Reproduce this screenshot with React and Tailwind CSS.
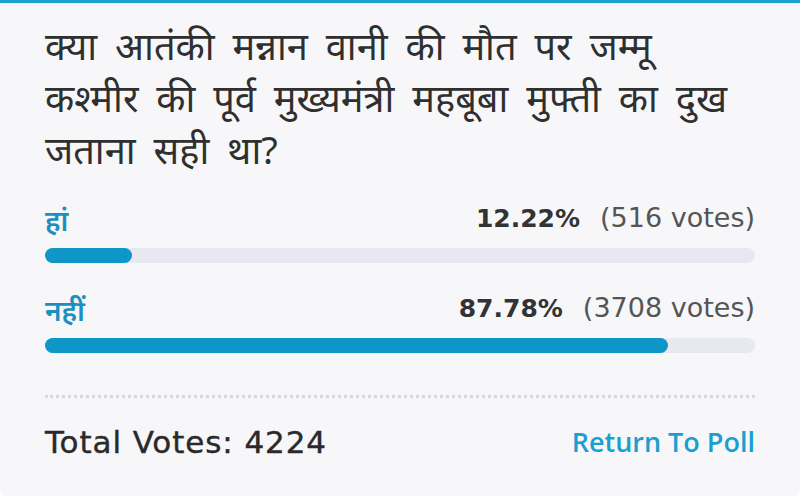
export default function App() {
  const opts = [
    { label: "हां", pct: 12.22, votes: 516 },
    { label: "नहीं", pct: 87.78, votes: 3708 },
  ];
  return (
    <div className="w-[800px] h-[500px] bg-white">
      <div className="h-[496px] bg-[#f7f7f9] border-t-[3px] border-[#1a9fd0] rounded-b-[6px] px-[45px] pt-[16px] flex flex-col" style={{ fontFamily: '"Noto Sans", "Liberation Sans", sans-serif' }}>
        <div className="text-[38px] leading-[52px] text-[#2f2f2f] [word-spacing:8px] whitespace-nowrap">
          क्या आतंकी मन्नान वानी की मौत पर जम्मू<br />
          कश्मीर की पूर्व मुख्यमंत्री महबूबा मुफ्ती का दुख<br />
          जताना सही था?
        </div>
        <div className="mt-[25px] flex flex-col gap-[27px]">
          {opts.map((o) => (
            <div key={o.label}>
              <div className="flex items-center justify-between h-[40px]">
                <span className="text-[28px] font-semibold text-[#1a8fc0] leading-[40px]">{o.label}</span>
                <span className="leading-[40px]" style={{ fontFamily: '"DejaVu Sans", sans-serif' }}>
                  <span className="text-[25px] font-bold text-[#333]">{o.pct.toFixed(2)}%</span>
                  <span className="text-[27px] text-[#555] ml-[20px]">({o.votes} votes)</span>
                </span>
              </div>
              <div className="mt-[8px] h-[15px] rounded-full bg-[#e8e8f0]">
                <div className="h-full rounded-full bg-[#0e96c8]" style={{ width: `${o.pct}%` }} />
              </div>
            </div>
          ))}
        </div>
        <div className="mt-[42px] border-t-[3px] border-dotted border-[#d8d8dc]" />
        <div className="mt-[24px] h-[40px] flex items-center justify-between">
          <span className="text-[31px] text-[#2a2a2a] tracking-[0.9px] [-webkit-text-stroke:0.4px_#2a2a2a]" style={{ fontFamily: '"DejaVu Sans", sans-serif' }}>Total Votes: 4224</span>
          <span className="text-[27px] font-semibold text-[#1a9fd0]" style={{ fontFamily: '"Open Sans", sans-serif' }}>Return To Poll</span>
        </div>
      </div>
    </div>
  );
}
